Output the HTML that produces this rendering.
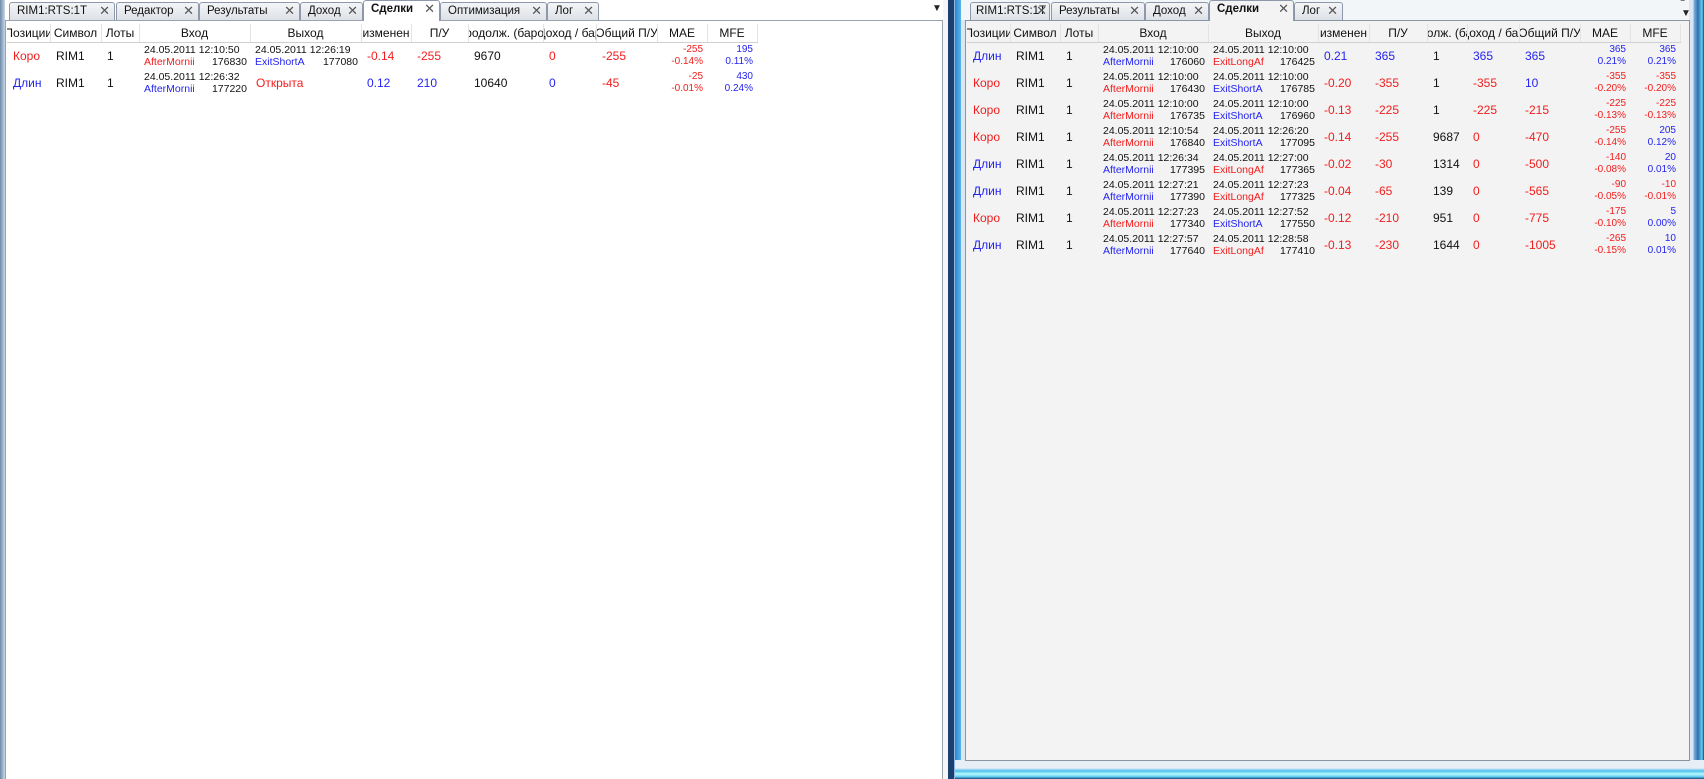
<!DOCTYPE html>
<html><head><meta charset="utf-8"><style>
*{margin:0;padding:0;box-sizing:border-box}
body{width:1704px;height:779px;overflow:hidden;background:#fff;font-family:"Liberation Sans","DejaVu Sans",sans-serif;position:relative}
.abs{position:absolute}
.tab{position:absolute;top:2px;height:18px;border:1px solid #8d99ab;border-bottom:none;border-radius:3px 3px 0 0;background:linear-gradient(#f4f5f7,#dde1e7);font-size:11.5px;line-height:16px;padding-left:7px;color:#111;white-space:nowrap;overflow:hidden}
.tab.act{background:#fff;font-weight:bold;top:0;height:21px;z-index:2;border-color:#8d99ab}
.tab .x{position:absolute;right:4px;top:0;font-weight:normal;color:#555;font-size:13px}
table{border-collapse:collapse;table-layout:fixed;position:absolute;font-size:12px}
th{font-weight:normal;height:18px;border-right:1px solid #e3e3e3;border-bottom:1px solid #d0d0d0;white-space:nowrap;overflow:hidden;color:#111;font-size:12px;position:relative}
th span{position:absolute;left:50%;top:2px;transform:translateX(-50%);white-space:nowrap}
td{height:27px;white-space:nowrap;overflow:hidden;padding-left:6px;vertical-align:middle;color:#111}
.r{color:#f21d1d}.b{color:#2424f0}
.d{font-size:10.5px;line-height:12px;padding-left:5px;padding-right:3px}
.d div{display:flex;justify-content:space-between}
.d span{overflow:hidden}
.m{font-size:10px;line-height:12px;text-align:right;padding-right:4px;padding-left:0}
</style></head><body>

<div class="abs" style="left:0;top:0;width:5px;height:779px;background:linear-gradient(90deg,#6d8aa8,#c9d8e6)"></div>
<div class="abs" style="left:5px;top:20px;width:938px;height:759px;border:1px solid #9aa3ae;border-bottom:none;background:#fff"></div>
<div class="tab" style="left:9px;width:106px">RIM1:RTS:1T<span class="x">✕</span></div>
<div class="tab" style="left:116px;width:83px">Редактор<span class="x">✕</span></div>
<div class="tab" style="left:199px;width:101px">Результаты<span class="x">✕</span></div>
<div class="tab" style="left:300px;width:63px">Доход<span class="x">✕</span></div>
<div class="tab act" style="left:363px;width:77px">Сделки<span class="x">✕</span></div>
<div class="tab" style="left:440px;width:107px">Оптимизация<span class="x">✕</span></div>
<div class="tab" style="left:547px;width:52px">Лог<span class="x">✕</span></div>
<div class="abs" style="left:932px;top:3px;font-size:10px;color:#222">▼</div>

<table style="left:7px;top:24px;width:750px">
<colgroup><col style="width:43px"><col style="width:51px"><col style="width:38px"><col style="width:111px"><col style="width:111px"><col style="width:50px"><col style="width:57px"><col style="width:75px"><col style="width:53px"><col style="width:61px"><col style="width:50px"><col style="width:50px"></colgroup>
<tr><th><span>Позиции</span></th><th><span>Символ</span></th><th><span>Лоты</span></th><th><span>Вход</span></th><th><span>Выход</span></th><th><span>изменен</span></th><th><span>П/У</span></th><th><span>Продолж. (баров)</span></th><th><span>Доход / бар</span></th><th><span>Общий П/У</span></th><th><span>MAE</span></th><th><span>MFE</span></th></tr>
<tr><td class="r">Коро</td><td>RIM1</td><td>1</td><td class="d">24.05.2011 12:10:50<div><span class="r">AfterMornii</span><span>176830</span></div></td><td class="d">24.05.2011 12:26:19<div><span class="b">ExitShortA</span><span>177080</span></div></td><td class="r">-0.14</td><td class="r">-255</td><td>9670</td><td class="r">0</td><td class="r">-255</td><td class="m r">-255<br>-0.14%</td><td class="m b">195<br>0.11%</td></tr>
<tr><td class="b">Длин</td><td>RIM1</td><td>1</td><td class="d">24.05.2011 12:26:32<div><span class="b">AfterMornii</span><span>177220</span></div></td><td class="r">Открыта</td><td class="b">0.12</td><td class="b">210</td><td>10640</td><td class="b">0</td><td class="r">-45</td><td class="m r">-25<br>-0.01%</td><td class="m b">430<br>0.24%</td></tr>
</table>

<div class="abs" style="left:943px;top:0;width:5px;height:779px;background:#f4f6f9"></div>
<div class="abs" style="left:948px;top:0;width:6px;height:779px;background:#1b3f6e"></div>
<div class="abs" style="left:954px;top:0;width:1px;height:779px;background:#8fb6dc"></div>
<div class="abs" style="left:955px;top:0;width:6px;height:779px;background:linear-gradient(90deg,#2f86cf,#5ab4ea)"></div>
<div class="abs" style="left:961px;top:0;width:4px;height:779px;background:#dbe6f2"></div>
<div class="abs" style="left:1689px;top:0;width:15px;height:779px;background:linear-gradient(90deg,#dbe6f2 0,#dbe6f2 4px,#7fb0dc 5px,#2d6fb2 9px,#5fd2f2 13px,#1b3f6e 15px)"></div>
<div class="abs" style="left:955px;top:760px;width:749px;height:19px;background:linear-gradient(#e8eef5 0,#e8eef5 8px,#4cc0ee 11px,#b8fafd 14px,#56c6ee 17px,#1b3f6e 19px)"></div>

<div class="abs" style="left:965px;top:20px;width:725px;height:741px;border:1px solid #8a95a3;background:#f3f3f3"></div>
<div class="abs" style="left:961px;top:0;width:728px;height:20px;background:#f3f6f9"></div>
<div class="tab" style="left:970px;width:80px;padding-left:5px">RIM1:RTS:1T<span class="x" style="right:2px">✕</span></div>
<div class="tab" style="left:1051px;width:94px">Результаты<span class="x">✕</span></div>
<div class="tab" style="left:1145px;width:64px">Доход<span class="x">✕</span></div>
<div class="tab act" style="left:1209px;width:85px;background:#f3f3f3">Сделки<span class="x">✕</span></div>
<div class="tab" style="left:1294px;width:49px">Лог<span class="x">✕</span></div>
<div class="abs" style="left:1681px;top:2px;font-size:10px;color:#222;line-height:8px">‾<br>▼</div>

<table style="left:967px;top:24px;width:713px">
<colgroup><col style="width:43px"><col style="width:50px"><col style="width:38px"><col style="width:110px"><col style="width:110px"><col style="width:51px"><col style="width:58px"><col style="width:40px"><col style="width:52px"><col style="width:61px"><col style="width:50px"><col style="width:50px"></colgroup>
<tr><th><span>Позиции</span></th><th><span>Символ</span></th><th><span>Лоты</span></th><th><span>Вход</span></th><th><span>Выход</span></th><th><span>изменен</span></th><th><span>П/У</span></th><th><span>Продолж. (баров)</span></th><th><span>Доход / бар</span></th><th><span>Общий П/У</span></th><th><span>MAE</span></th><th><span>MFE</span></th></tr>
<tr><td class="b">Длин</td><td>RIM1</td><td>1</td><td class="d">24.05.2011 12:10:00<div><span class="b">AfterMornii</span><span>176060</span></div></td><td class="d">24.05.2011 12:10:00<div><span class="r">ExitLongAf</span><span>176425</span></div></td><td class="b">0.21</td><td class="b">365</td><td>1</td><td class="b">365</td><td class="b">365</td><td class="m b">365<br>0.21%</td><td class="m b">365<br>0.21%</td></tr>
<tr><td class="r">Коро</td><td>RIM1</td><td>1</td><td class="d">24.05.2011 12:10:00<div><span class="r">AfterMornii</span><span>176430</span></div></td><td class="d">24.05.2011 12:10:00<div><span class="b">ExitShortA</span><span>176785</span></div></td><td class="r">-0.20</td><td class="r">-355</td><td>1</td><td class="r">-355</td><td class="b">10</td><td class="m r">-355<br>-0.20%</td><td class="m r">-355<br>-0.20%</td></tr>
<tr><td class="r">Коро</td><td>RIM1</td><td>1</td><td class="d">24.05.2011 12:10:00<div><span class="r">AfterMornii</span><span>176735</span></div></td><td class="d">24.05.2011 12:10:00<div><span class="b">ExitShortA</span><span>176960</span></div></td><td class="r">-0.13</td><td class="r">-225</td><td>1</td><td class="r">-225</td><td class="r">-215</td><td class="m r">-225<br>-0.13%</td><td class="m r">-225<br>-0.13%</td></tr>
<tr><td class="r">Коро</td><td>RIM1</td><td>1</td><td class="d">24.05.2011 12:10:54<div><span class="r">AfterMornii</span><span>176840</span></div></td><td class="d">24.05.2011 12:26:20<div><span class="b">ExitShortA</span><span>177095</span></div></td><td class="r">-0.14</td><td class="r">-255</td><td>9687</td><td class="r">0</td><td class="r">-470</td><td class="m r">-255<br>-0.14%</td><td class="m b">205<br>0.12%</td></tr>
<tr><td class="b">Длин</td><td>RIM1</td><td>1</td><td class="d">24.05.2011 12:26:34<div><span class="b">AfterMornii</span><span>177395</span></div></td><td class="d">24.05.2011 12:27:00<div><span class="r">ExitLongAf</span><span>177365</span></div></td><td class="r">-0.02</td><td class="r">-30</td><td>1314</td><td class="r">0</td><td class="r">-500</td><td class="m r">-140<br>-0.08%</td><td class="m b">20<br>0.01%</td></tr>
<tr><td class="b">Длин</td><td>RIM1</td><td>1</td><td class="d">24.05.2011 12:27:21<div><span class="b">AfterMornii</span><span>177390</span></div></td><td class="d">24.05.2011 12:27:23<div><span class="r">ExitLongAf</span><span>177325</span></div></td><td class="r">-0.04</td><td class="r">-65</td><td>139</td><td class="r">0</td><td class="r">-565</td><td class="m r">-90<br>-0.05%</td><td class="m r">-10<br>-0.01%</td></tr>
<tr><td class="r">Коро</td><td>RIM1</td><td>1</td><td class="d">24.05.2011 12:27:23<div><span class="r">AfterMornii</span><span>177340</span></div></td><td class="d">24.05.2011 12:27:52<div><span class="b">ExitShortA</span><span>177550</span></div></td><td class="r">-0.12</td><td class="r">-210</td><td>951</td><td class="r">0</td><td class="r">-775</td><td class="m r">-175<br>-0.10%</td><td class="m b">5<br>0.00%</td></tr>
<tr><td class="b">Длин</td><td>RIM1</td><td>1</td><td class="d">24.05.2011 12:27:57<div><span class="b">AfterMornii</span><span>177640</span></div></td><td class="d">24.05.2011 12:28:58<div><span class="r">ExitLongAf</span><span>177410</span></div></td><td class="r">-0.13</td><td class="r">-230</td><td>1644</td><td class="r">0</td><td class="r">-1005</td><td class="m r">-265<br>-0.15%</td><td class="m b">10<br>0.01%</td></tr>
</table>
</body></html>
